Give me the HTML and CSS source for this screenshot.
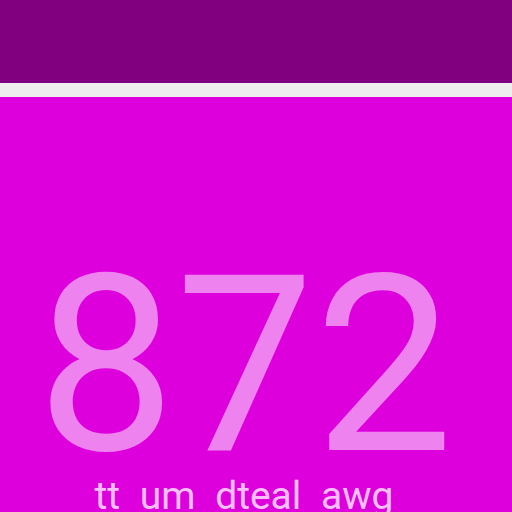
FILE: index.html
```html
<!DOCTYPE html>
<html>
<head>
<meta charset="utf-8">
<link rel="stylesheet" href="styles.css">
</head>
<body>
<header class="topbar"></header>
<main class="panel">
  <div class="count">872</div>
  <div class="caption">tt um dteal awg</div>
</main>
</body>
</html>
```
FILE: styles.css
```css
html, body {
  margin: 0;
  padding: 0;
  height: 100%;
  overflow: hidden;
}
body {
  background: #eeeeee;
  font-family: Roboto, "Noto Sans", sans-serif;
}
.topbar {
  height: 83px;
  background: #800080;
  margin-bottom: 14px;
}
.panel {
  background: #dd00dd;
  height: 415px;
  padding: 154px 22px 0 0;
  box-sizing: border-box;
  text-align: center;
}
.count {
  font-size: 247px;
  line-height: 230px;
  color: #ee82ee;
}
.caption {
  font-size: 39px;
  line-height: 31px;
  word-spacing: 10px;
  padding-right: 2px;
  color: #f8c0f8;
}
```
